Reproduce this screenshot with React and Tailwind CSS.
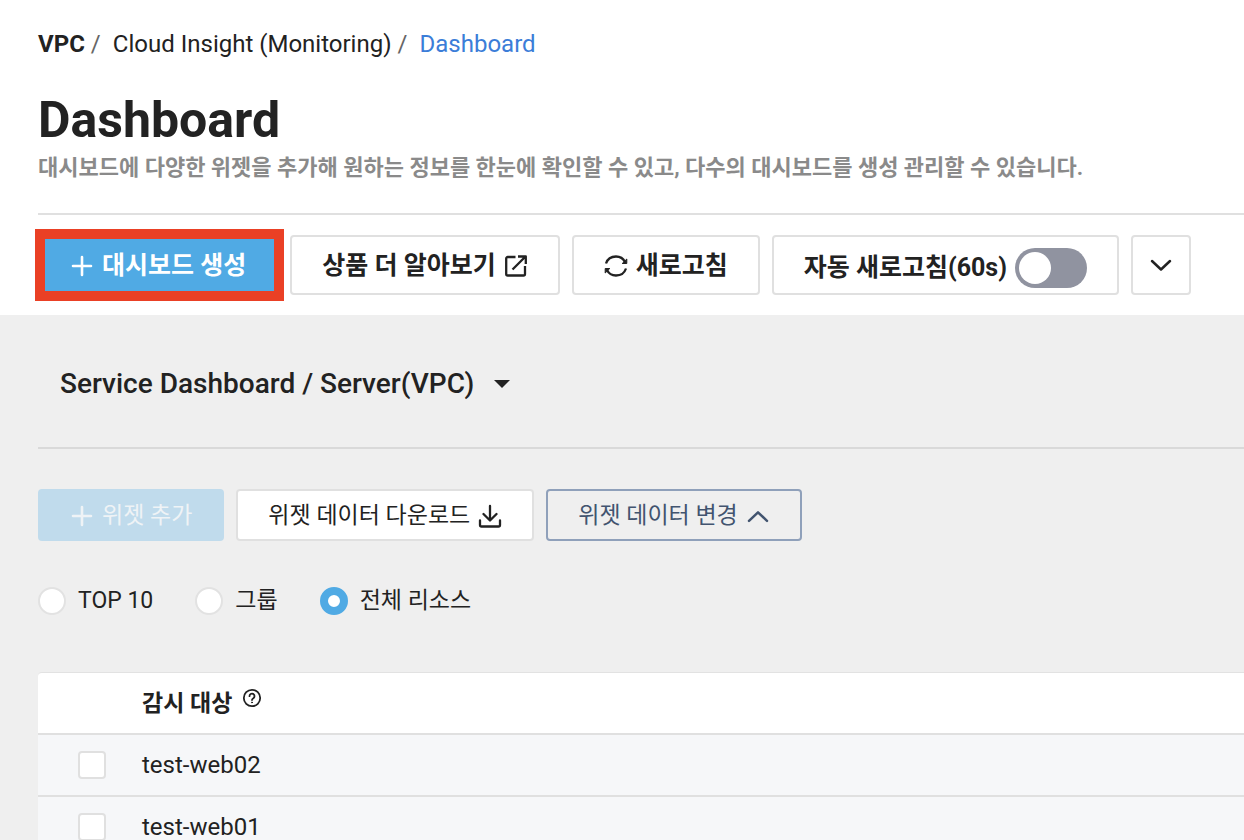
const stroke = {
  fill: "none",
  stroke: "currentColor",
  strokeWidth: 2.3,
  strokeLinecap: "round",
  strokeLinejoin: "round",
  "aria-hidden": true,
};

function PlusIcon() {
  return (
    <svg className="size-6" viewBox="0 0 24 24" {...stroke} strokeWidth="2.6">
      <path d="M12 3v18M3 12h18" />
    </svg>
  );
}

function ExternalIcon() {
  return (
    <svg className="size-6" viewBox="0 0 24 24" {...stroke} strokeLinecap="butt">
      <path d="M11.500 3H3.700A1.500 1.500 0 0 0 2.200 4.500V20a1.500 1.500 0 0 0 1.500 1.500H19.500A1.500 1.500 0 0 0 21 20v-8" />
      <path d="M8.500 15.500 21 3M14 2.500h7.800V10" />
    </svg>
  );
}

function RefreshIcon() {
  return (
    <svg className="size-6" viewBox="0 0 24 24" {...stroke} strokeLinecap="butt">
      <path d="M2 9.500C3.500 5 7.300 2.500 12 2.500c4 0 7.300 2 9 5.500" />
      <path d="M22 14.500c-1.500 4.500-5.300 7-10 7-4 0-7.300-2-9-5.500" />
      <path d="M22.800 5v4.500h-4.600zM1.200 19v-4.500h4.600z" fill="currentColor" strokeWidth="1" />
    </svg>
  );
}

function DownloadIcon() {
  return (
    <svg className="size-6" viewBox="0 0 24 24" {...stroke}>
      <path d="M12 2v14M5.500 10l6.500 6.500L18.500 10" />
      <path d="M2 16.500V21a1.500 1.500 0 0 0 1.500 1.500h17A1.500 1.500 0 0 0 22 21v-4.500" />
    </svg>
  );
}

function ChevronIcon({ up }) {
  return (
    <svg className="size-6" viewBox="0 0 24 24" {...stroke} strokeWidth="2.5">
      <path d={up ? "M3 16.800 12 8.300l9 8.500" : "M3 8 12 16.500 21 8"} />
    </svg>
  );
}

function HelpIcon() {
  return (
    <svg className="size-5" viewBox="0 0 20 20" {...stroke} strokeWidth="1.8">
      <circle cx="10" cy="10" r="8.200" />
      <path d="M7.500 8.200a2.500 2.500 0 1 1 3.900 2c-.9.6-1.400 1-1.400 1.900" />
      <circle cx="10" cy="14.400" r="0.500" fill="currentColor" strokeWidth="1" />
    </svg>
  );
}

const actionButton =
  "flex h-[60px] items-center gap-2 rounded border-2 border-[#e0e0e0] bg-white text-[25px] font-bold";
const widgetButton = "flex h-[52px] items-center gap-2 rounded border-2 px-[30px] pt-0.5 text-[23px]";

function Radio({ label, ...props }) {
  return (
    <label className="flex items-center gap-3">
      <input
        type="radio"
        name="scope"
        className="size-7 appearance-none rounded-full border-2 border-[#e2e2e2] bg-white checked:border-8 checked:border-[#50aae4]"
        {...props}
      />
      {label}
    </label>
  );
}

const targets = ["test-web02", "test-web01"];

export default function App() {
  return (
    <div className="min-h-screen bg-[#efefef] font-[Roboto,'Noto_Sans_CJK_KR',sans-serif] text-[#222]">
      <header className="bg-white pb-5 pl-[38px]">
        <nav aria-label="Breadcrumb" className="pt-7">
          <ol className="flex text-2xl leading-8">
            <li className="font-bold">
              <a href="#vpc">VPC</a>
            </li>
            <li className="flex">
              <span className="w-7 pl-1.5 text-[#666]">/</span>
              <a href="#insight">Cloud Insight (Monitoring)</a>
            </li>
            <li className="flex">
              <span className="w-7 pl-1.5 text-[#666]">/</span>
              <a href="#dashboard" aria-current="page" className="text-[#3b7dd8]">
                Dashboard
              </a>
            </li>
          </ol>
        </nav>
        <h1 className="mt-[30px] text-[50px] leading-[60px] font-bold">Dashboard</h1>
        <p className="mt-0.5 text-[22px] leading-8 font-bold text-[#8a8a8a]">
          대시보드에 다양한 위젯을 추가해 원하는 정보를 한눈에 확인할 수 있고, 다수의 대시보드를 생성 관리할 수 있습니다.
        </p>
        <div className="mt-[29px] flex gap-3 border-t-2 border-[#e0e0e0] pt-5">
          <div className="relative">
            <button
              type="button"
              className="flex h-[60px] items-center gap-2 rounded bg-[#50aae4] px-8 pt-0.5 text-[25px] font-bold text-white"
            >
              <PlusIcon />
              대시보드 생성
            </button>
            <span className="pointer-events-none absolute -top-1.5 -right-1.5 -bottom-1.5 -left-[3px] border-10 border-[#ea4025]" />
          </div>
          <button type="button" className={`${actionButton} px-[30px] pt-0.5`}>
            상품 더 알아보기
            <ExternalIcon />
          </button>
          <button type="button" className={`${actionButton} px-[30px] pt-0.5`}>
            <RefreshIcon />
            새로고침
          </button>
          <label className={`${actionButton} px-[30px] pt-1.5`}>
            자동 새로고침(60s)
            <input
              type="checkbox"
              role="switch"
              className="h-10 w-[72px] appearance-none rounded-full bg-[#9093a0] p-1 before:block before:size-8 before:rounded-full before:bg-white checked:bg-[#50aae4] checked:before:ml-8"
            />
          </label>
          <button type="button" aria-label="More" className={`${actionButton} px-4`}>
            <ChevronIcon />
          </button>
        </div>
      </header>

      <main className="pl-[38px]">
        <div className="border-b-2 border-[#d9d9d9] px-[22px] pt-[51px] pb-[45px]">
          <button type="button" className="flex items-center gap-5 text-[28px] leading-9 font-medium">
            Service Dashboard / Server(VPC)
            <svg className="h-2 w-4" viewBox="0 0 16 8" fill="currentColor" aria-hidden="true">
              <path d="M0 0h16L8 8z" />
            </svg>
          </button>
        </div>

        <div className="mt-10 flex gap-3">
          <button type="button" disabled className={`${widgetButton} border-[#c0dbec] bg-[#c0dbec] text-[#eff3f6]`}>
            <PlusIcon />
            위젯 추가
          </button>
          <button type="button" className={`${widgetButton} border-[#e0e0e0] bg-white`}>
            위젯 데이터 다운로드
            <DownloadIcon />
          </button>
          <button
            type="button"
            aria-expanded="true"
            className={`${widgetButton} border-[#8fa0ba] text-[#42546f]`}
          >
            위젯 데이터 변경
            <ChevronIcon up />
          </button>
        </div>

        <div className="mt-11 flex gap-[42px] text-[23px] leading-8">
          <Radio label="TOP 10" />
          <Radio label="그룹" />
          <Radio label="전체 리소스" defaultChecked />
        </div>

        <div className="mt-[55px] overflow-hidden rounded-tl border-t border-[#e2e2e2] bg-white">
          <table className="w-full text-left text-2xl leading-8">
            <thead>
              <tr className="h-[61px] border-b-2 border-[#e0e0e0]">
                <td className="w-[104px]" />
                <th scope="col" className="pt-0.5 text-[23px] font-bold">
                  <span className="flex gap-2.5">
                    감시 대상
                    <HelpIcon />
                  </span>
                </th>
              </tr>
            </thead>
            <tbody>
              {targets.map((name) => (
                <tr key={name} className="h-[62px] border-b-2 border-[#e0e0e0] bg-[#f6f7f9]">
                  <td className="pl-10">
                    <input
                      id={name}
                      type="checkbox"
                      className="block size-7 appearance-none rounded border-2 border-[#e0e0e0] bg-white checked:bg-[#50aae4]"
                    />
                  </td>
                  <td>
                    <label htmlFor={name}>{name}</label>
                  </td>
                </tr>
              ))}
            </tbody>
          </table>
        </div>
      </main>
    </div>
  );
}
